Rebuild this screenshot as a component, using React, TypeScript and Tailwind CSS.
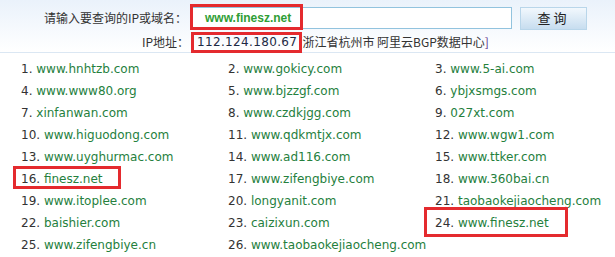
const sites = [
  "www.hnhtzb.com",
  "www.gokicy.com",
  "www.5-ai.com",
  "www.www80.org",
  "www.bjzzgf.com",
  "ybjxsmgs.com",
  "xinfanwan.com",
  "www.czdkjgg.com",
  "027xt.com",
  "www.higuodong.com",
  "www.qdkmtjx.com",
  "www.wgw1.com",
  "www.uyghurmac.com",
  "www.ad116.com",
  "www.ttker.com",
  "finesz.net",
  "www.zifengbiye.com",
  "www.360bai.cn",
  "www.itoplee.com",
  "longyanit.com",
  "taobaokejiaocheng.com",
  "baishier.com",
  "caizixun.com",
  "www.finesz.net",
  "www.zifengbiye.cn",
  "www.taobaokejiaocheng.com",
];

const cjk = "font-['Noto_Sans_CJK_SC','Noto_Sans',sans-serif]";

function Mark({ className }: { className: string }) {
  // red annotation rectangle drawn over the page
  return (
    <div
      className={`pointer-events-none absolute border-[3px] border-[#e42a2e] ${className}`}
    />
  );
}

export default function App() {
  return (
    <div className="relative h-[257px] w-[615px] overflow-hidden bg-white text-[#333]">
      <div className="h-[53px] border-b border-[#dbe7f3] bg-gradient-to-b from-[#eaf2fb] to-white pt-[7px]">
        <div className="flex h-[22px] items-center">
          <div className={`w-[189px] pr-[2px] text-right text-[12px] ${cjk}`}>
            请输入要查询的IP或域名：
          </div>
          <div className="ml-[2px] flex h-[22px] w-[321px] items-center border border-[#92c3de] bg-white pl-[13px]">
            <span className="font-['Liberation_Sans',Arial,sans-serif] text-[12px] font-bold text-[#2f9e35]">
              www.finesz.net
            </span>
          </div>
          <button
            className={`ml-[8px] h-[23px] w-[67px] border border-[#b9d6ea] bg-gradient-to-b from-[#f2f8fd] to-[#c7ddef] text-[13px] tracking-[3px] text-[#222] ${cjk}`}
          >
            查询
          </button>
        </div>
        <div className="mt-[3px] flex h-[20px] items-center">
          <div className={`w-[190px] pr-[1px] text-right text-[12px] ${cjk}`}>
            IP地址：
          </div>
          <span className="ml-[7px] font-['DejaVu_Sans',sans-serif] text-[12px] tracking-[0.35px] text-[#1d2a44]">
            112.124.180.67
          </span>
          <span className={`ml-[1px] text-[12px] text-[#333] ${cjk}`}>
            <span className="text-[#5a2a86]">[</span>
            浙江省杭州市 阿里云BGP数据中心
            <span className="text-[#5a2a86]">]</span>
          </span>
        </div>
      </div>

      <ul className="grid grid-cols-[207px_207px_201px] pl-[21px] pt-[5px] font-['DejaVu_Sans',sans-serif] text-[12px] leading-[22px]">
        {sites.map((site, i) => (
          <li key={i} className="whitespace-nowrap">
            <span className="text-[#333]">{i + 1}. </span>
            <span className="text-[#25803d]">{site}</span>
          </li>
        ))}
      </ul>

      <Mark className="left-[190px] top-[4px] h-[26px] w-[113px]" />
      <Mark className="left-[191px] top-[32px] h-[21px] w-[111px]" />
      <Mark className="left-[13px] top-[166px] h-[23px] w-[108px]" />
      <Mark className="left-[424px] top-[207px] h-[30px] w-[144px]" />
    </div>
  );
}
